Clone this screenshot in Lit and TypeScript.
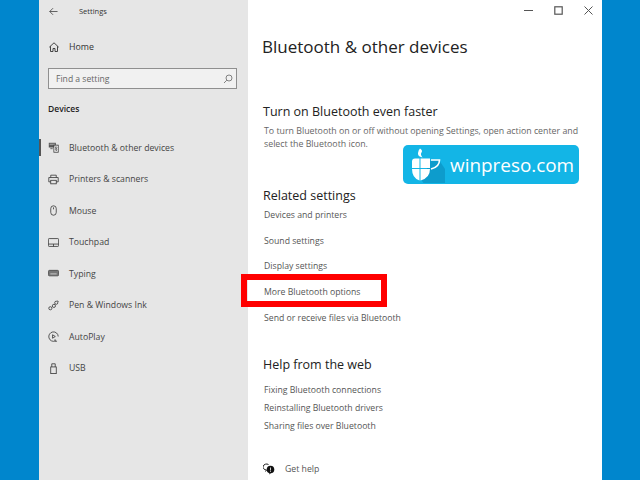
import { LitElement, html, css, svg } from "lit";
import { customElement } from "lit/decorators.js";

const S = (c: unknown) => html`<svg class="ic" viewBox="0 0 14 14" fill="none" stroke="#333" stroke-width="1">${c}</svg>`;
const icons: Record<string, unknown> = {
  bt: html`<svg class="ic" viewBox="0 0 14 14"><rect x="1" y="1" width="9" height="6" fill="#555"/><rect x="2" y="2" width="7" height="2" fill="#999"/><rect x="7.5" y="4" width="5.5" height="9" fill="#fff" stroke="#333"/><path d="M9 6l2.4 4-1.2 1.600V5.600l1.200 1.400L9 10" fill="none" stroke="#333" stroke-width=".7"/><path d="M3 8.500h3" stroke="#444"/></svg>`,
  pr: S(svg`<path d="M3.500 4.500V1.500h7v3M3.500 10h-2.500V4.500h12V10h-2.500"/><rect x="3.500" y="8" width="7" height="4.500"/>`),
  mo: S(svg`<rect x="3.500" y="1" width="7" height="12" rx="3.500"/><path d="M7 3v2.500"/>`),
  tp: S(svg`<rect x=".5" y="2" width="13" height="10" rx="1"/><path d="M.5 9h13M7 9v3"/>`),
  ty: html`<svg class="ic" viewBox="0 0 14 14"><rect x=".5" y="3" width="13" height="7" rx="1.500" fill="#777" stroke="#444"/><path d="M3 7.500h8" stroke="#ddd"/></svg>`,
  pn: S(svg`<circle cx="3" cy="10.500" r="2"/><circle cx="7.500" cy="7.500" r="2"/><circle cx="10.500" cy="3.500" r="2"/><path d="M12 1l1.500 1"/>`),
  ap: S(svg`<path d="M9.500 12.600A6 6 0 1 1 13 7"/><path d="M5.800 4.800l3.500 2.200-3.500 2.200z"/><path d="M9 10.500v2.500h2.500"/>`),
  us: S(svg`<rect x="3.500" y="5" width="7" height="8.500"/><path d="M4.800 5V1h4.400v4"/>`),
};

const nav = [
  ["bt", "Bluetooth & other devices"],
  ["pr", "Printers & scanners"],
  ["mo", "Mouse"],
  ["tp", "Touchpad"],
  ["ty", "Typing"],
  ["pn", "Pen & Windows Ink"],
  ["ap", "AutoPlay"],
  ["us", "USB"],
];

@customElement("app-root")
export class AppRoot extends LitElement {
  static styles = css`
    :host {
      display: block;
      width: 640px;
      height: 480px;
      overflow: hidden;
      background: #0086cd;
      font-family: "Open Sans", "Noto Sans", sans-serif;
      color: #333;
    }
    .window {
      position: relative;
      display: flex;
      width: 563px;
      height: 480px;
      margin-left: 39px;
      background: #fff;
      overflow: hidden;
    }
    .side {
      width: 209px;
      flex: none;
      background: #e6e6e6;
      display: flex;
      flex-direction: column;
    }
    .title {
      display: flex;
      align-items: center;
      height: 22px;
      padding-left: 10px;
      font-size: 7.5px;
    }
    .title svg { width: 9px; height: 9px; margin-right: 21px; }
    .home {
      display: flex;
      align-items: center;
      height: 16px;
      margin-top: 17px;
      padding-left: 10px;
      font-size: 8.8px;
    }
    .home svg { width: 10px; height: 10px; margin-right: 10px; }
    .search {
      display: flex;
      align-items: center;
      justify-content: space-between;
      box-sizing: border-box;
      width: 189px;
      height: 21px;
      margin: 13px 0 0 9px;
      padding: 0 3px 0 7px;
      border: 1.5px solid #8f8f8f;
      background: #f1f1f1;
      font-size: 8.6px;
      color: #666;
    }
    .search svg { width: 10px; height: 10px; }
    .group {
      margin: 14px 0 0 9px;
      font-size: 8.5px;
      font-weight: 600;
      line-height: 12px;
      color: #222;
    }
    nav { margin-top: 17px; display: flex; flex-direction: column; }
    .item {
      position: relative;
      display: flex;
      align-items: center;
      height: 31.5px;
      padding-left: 9px;
      font-size: 8.7px;
      color: #444;
    }
    .item.on::before {
      content: "";
      position: absolute;
      left: 0;
      top: 7px;
      width: 2px;
      height: 17px;
      background: #555;
    }
    .ic { width: 11px; height: 11px; margin-right: 10px; flex: none; }
    main { flex: 1; padding-left: 14px; }
    .ctrl {
      position: absolute;
      top: 0;
      right: 0;
      display: flex;
      align-items: center;
      height: 20px;
      gap: 21px;
      padding-right: 9px;
    }
    .ctrl svg { width: 9px; height: 9px; display: block; }
    h1 {
      margin: 34px 0 0;
      font-size: 17px;
      line-height: 26px;
      font-weight: 400;
      color: #222;
    }
    h2 {
      margin: 0;
      font-size: 12.5px;
      line-height: 18px;
      font-weight: 400;
      color: #222;
      padding-left: 1px;
    }
    .h-a { margin-top: 43px; }
    p {
      margin: 4px 0 0 2px;
      font-size: 8.8px;
      line-height: 12.5px;
      color: #666;
      width: 320px;
    }
    .h-b { margin-top: 37px; }
    .h-c { margin-top: 26px; }
    a { display: flex; align-items: center; padding-left: 2px; font-size: 8.7px; color: #555; }
    .rel { margin-top: -3px; }
    .rel a { height: 25.7px; }
    .web { margin-top: 7px; }
    .web a { height: 18px; }
    .help {
      display: flex;
      align-items: center;
      margin: 28px 0 0 1px;
      font-size: 8.7px;
      color: #555;
    }
    .help svg { width: 12px; height: 12px; margin-right: 10px; }
    .mark {
      position: absolute;
      left: 202px;
      top: 274px;
      width: 146px;
      height: 33px;
      box-sizing: border-box;
      border: 6px solid #ff0000;
    }
    .badge {
      position: absolute;
      left: 364px;
      top: 145px;
      width: 176px;
      height: 39px;
      display: flex;
      align-items: center;
      box-sizing: border-box;
      padding-left: 9px;
      border-radius: 5px;
      background: #13b5e6;
      color: #fff;
      font-size: 18.9px;
      font-family: "Open Sans", sans-serif;
      overflow: hidden;
    }
    .badge svg { width: 34px; height: 36px; margin-right: 4px; flex: none; }
  `;

  render() {
    return html`
      <div class="window">
        <div class="side">
          <div class="title">
            <svg viewBox="0 0 10 10" fill="none" stroke="#444" stroke-width=".9"><path d="M9.5 5H.8M4.500 1.300L.8 5l3.700 3.700"/></svg>
            <span>Settings</span>
          </div>
          <div class="home">
            <svg viewBox="0 0 10 10" fill="none" stroke="#333" stroke-width=".9"><path d="M.3 5.200L5 .8l4.700 4.400M1.500 4.300V9.500h2.500V6.500h2V9.500h2.500V4.300"/></svg>
            <span>Home</span>
          </div>
          <div class="search">
            <span>Find a setting</span>
            <svg viewBox="0 0 10 10" fill="none" stroke="#666" stroke-width=".8"><circle cx="6" cy="4" r="3"/><path d="M3.800 6.200L1 9"/></svg>
          </div>
          <div class="group">Devices</div>
          <nav>
            ${nav.map(
              ([k, t], i) => html`<div class="item ${i === 0 ? "on" : ""}">${icons[k]}<span>${t}</span></div>`
            )}
          </nav>
        </div>
        <main>
          <h1>Bluetooth &amp; other devices</h1>
          <h2 class="h-a">Turn on Bluetooth even faster</h2>
          <p>To turn Bluetooth on or off without opening Settings, open action center and select the Bluetooth icon.</p>
          <h2 class="h-b">Related settings</h2>
          <div class="rel">
            <a>Devices and printers</a>
            <a>Sound settings</a>
            <a>Display settings</a>
            <a>More Bluetooth options</a>
            <a>Send or receive files via Bluetooth</a>
          </div>
          <h2 class="h-c">Help from the web</h2>
          <div class="web">
            <a>Fixing Bluetooth connections</a>
            <a>Reinstalling Bluetooth drivers</a>
            <a>Sharing files over Bluetooth</a>
          </div>
          <div class="help">
            <svg viewBox="0 0 12 12"><path d="M5.500 1.500a3.500 3 0 1 0-2 5.500l-1 1.500" fill="none" stroke="#222"/><circle cx="7.500" cy="6.500" r="3.800" fill="#111"/><path d="M6.500 10l-.5 1.500 2-1.200" fill="#111"/><path d="M7.500 4.500v3M7.500 8.200v.8" stroke="#fff" stroke-width=".8"/></svg>
            <span>Get help</span>
          </div>
        </main>
        <div class="ctrl">
          <svg viewBox="0 0 9 9" stroke="#555" fill="none"><path d="M0 4.500h9"/></svg>
          <svg viewBox="0 0 9 9" stroke="#555" fill="none" stroke-width="1.200"><rect x=".8" y=".8" width="7.400" height="7.400"/></svg>
          <svg viewBox="0 0 9 9" stroke="#555" fill="none"><path d="M.5.500l8 8M8.500.500l-8 8"/></svg>
        </div>
        <div class="mark"></div>
        <div class="badge">
          <svg viewBox="0 0 34 36">
            <path d="M10 34 L18 14 L27 13 L33 22 V38 H13 Z" fill="#0d9ccc"/>
            <path d="M3 11.500H7.500V21H0V14.500Q0 11.500 3 11.500ZM8.500 11.500H18V21H8.500ZM0 22H7.500V33.500Q0 31 0 22ZM8.500 22H18Q18 31 8.500 33.500Z" fill="#fff"/>
            <path d="M19 13h8.500q0 7-8.500 9" fill="none" stroke="#fff" stroke-width="1.600"/>
            <path d="M8 1.500q3 2 1.500 4t1 5q-5-1-4.500-4.500t2-4.500z" fill="#fff"/>
          </svg>
          <span>winpreso.com</span>
        </div>
      </div>
    `;
  }
}
